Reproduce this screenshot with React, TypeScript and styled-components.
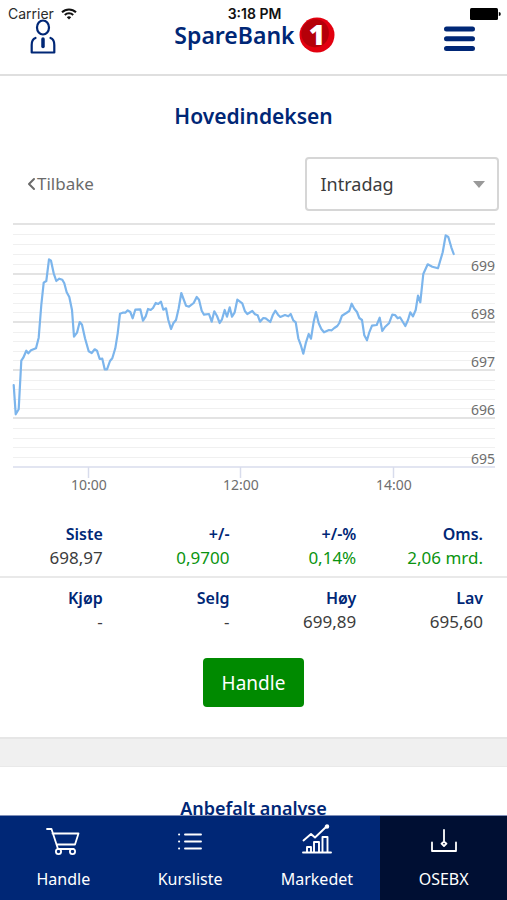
import React from "react";
import styled, { createGlobalStyle } from "styled-components";

const navy = "#002776";

const GlobalStyle = createGlobalStyle`
  *, *::before, *::after { box-sizing: border-box; }
  body {
    margin: 0;
    background: #fff;
    color: #3c3c3c;
    font-family: "Noto Sans", "Open Sans", sans-serif;
  }
  button, select { font-family: inherit; }
`;

const Screen = styled.div`
  height: 100vh;
  display: flex;
  flex-direction: column;
  overflow: hidden;
`;

const StatusBar = styled.div`
  position: absolute;
  top: 0;
  left: 0;
  right: 0;
  height: 28px;
  padding: 0 6px 0 8px;
  display: grid;
  grid-template-columns: 1fr auto 1fr;
  align-items: center;
  color: #2b2b2b;
  font: 14px/16px "Inter", sans-serif;
  pointer-events: none;
`;

const Carrier = styled.span`
  display: flex;
  align-items: center;
  gap: 7px;
`;

const Clock = styled.span`
  color: #111;
  font-weight: 600;
`;

const BatterySlot = styled.span`
  justify-self: end;
  display: flex;
`;

const Header = styled.header`
  flex: none;
  height: 76px;
  padding: 17px 32px 0 30px;
  display: grid;
  grid-template-columns: 1fr auto 1fr;
  align-items: start;
  border-bottom: 2px solid #dfdfdf;
`;

const IconButton = styled.button<{ $end?: boolean }>`
  justify-self: ${(p) => (p.$end ? "end" : "start")};
  display: flex;
  padding: 0;
  border: 0;
  background: none;
  color: ${navy};
  cursor: pointer;
`;

const Brand = styled.a`
  display: flex;
  align-items: center;
  gap: 4px;
  padding-left: 4px;
  color: ${navy};
  font: 600 23px/24px "Noto Sans", sans-serif;
  text-decoration: none;
`;

const BrandMark = styled.svg`
  overflow: visible;
  font: 800 28px/28px "Open Sans", sans-serif;
`;

const Content = styled.main`
  flex: 1;
  min-height: 0;
  overflow: hidden;
`;

const PageTitle = styled.h1`
  margin: 0;
  padding-top: 24px;
  color: ${navy};
  font-size: 21px;
  line-height: 32px;
  font-weight: 600;
  text-align: center;
`;

const Toolbar = styled.div`
  display: flex;
  align-items: center;
  justify-content: space-between;
  padding: 25px 8px 0 27px;
`;

const BackLink = styled.a`
  display: flex;
  align-items: center;
  gap: 1px;
  color: #6b6b6b;
  font-size: 17px;
  line-height: 24px;
  text-decoration: none;
`;

const SelectBox = styled.label`
  position: relative;
  width: 41%;
`;

const PeriodSelect = styled.select`
  width: 100%;
  height: 54px;
  padding: 0 40px 0 13px;
  appearance: none;
  border: 2px solid #d6d6d6;
  border-radius: 4px;
  background: #fff;
  color: #3c3c3c;
  font-size: 18px;
`;

const Caret = styled.svg`
  position: absolute;
  right: 14px;
  top: 24px;
  pointer-events: none;
`;

const Chart = styled.svg`
  display: block;
  width: 100%;
  height: auto;
  margin-top: 9px;
  font-size: 14px;
  fill: #6e6e6e;
`;

const Stats = styled.dl`
  margin: 0;
  display: grid;
  grid-template-columns: repeat(4, 1fr);
  padding-top: 14px;
`;

const Stat = styled.div<{ $ruled?: boolean }>`
  padding: 8px 24px 6px 0;
  text-align: right;
  line-height: 24px;
  border-bottom: 2px solid ${(p) => (p.$ruled ? "#e9e9e9" : "transparent")};
`;

const StatName = styled.dt`
  color: ${navy};
  font-size: 16px;
  font-weight: 600;
`;

const StatValue = styled.dd<{ $up?: boolean }>`
  margin: 0;
  color: ${(p) => (p.$up ? "#0a9410" : "#3c3c3c")};
  font-size: 17px;
`;

const Action = styled.div`
  display: flex;
  justify-content: center;
  padding: 16px 0 30px;
`;

const TradeButton = styled.button`
  height: 49px;
  padding: 0 19px;
  border: 0;
  border-radius: 4px;
  background: #008a00;
  color: #fff;
  font-size: 19px;
  cursor: pointer;
`;

const Band = styled.div`
  height: 30px;
  background: #f0f0f0;
  border-top: 2px solid #e6e6e6;
  border-bottom: 1px solid #e9e9e9;
`;

const SectionTitle = styled.h2`
  margin: 0;
  padding-top: 28px;
  color: ${navy};
  font-size: 18px;
  line-height: 26px;
  font-weight: 600;
  text-align: center;
`;

const TabBar = styled.nav`
  flex: none;
  display: grid;
  grid-template-columns: repeat(4, 1fr);
  height: 85px;
  border-top: 1px solid #7f8fb8;
  background: ${navy};
`;

const Tab = styled.a<{ $active?: boolean }>`
  display: flex;
  flex-direction: column;
  align-items: center;
  gap: 7px;
  padding-top: 8px;
  background: ${(p) => (p.$active ? "#000f33" : "transparent")};
  color: #fff;
  font-size: 16px;
  line-height: 24px;
  text-decoration: none;
`;

const hourTicks = [
  { x: 89, label: "10:00" },
  { x: 241, label: "12:00" },
  { x: 394, label: "14:00" },
];

const levels = [
  { y: 4, label: "" },
  { y: 54, label: "699" },
  { y: 102, label: "698" },
  { y: 150, label: "697" },
  { y: 198, label: "696" },
  { y: 247, label: "695" },
];

const series =
  "0.7,165 2.7,194.3 5.7,189.3 8.3,140.7 10.3,137.7 13.3,130.7 15.3,133.3 18,130.3 23,128.3 25.7,117.7 28.3,85 30.7,62.7 33.3,61 36,39.3 38,40.7 40.7,53.3 43.3,61 46.3,58.7 49.3,59.7 51.3,63.3 53.7,72.3 56.3,77 59,90 61,116.7 64,112.7 66.7,102 69,104.7 72,118.3 75.7,131.3 78.7,133 81.7,129.3 84,130.7 86.7,139 89.3,138.7 91.7,149.3 94,149.3 97,141 99.3,138.3 102.3,128.3 104.7,113.3 107,93.7 109.7,92.7 112.3,92.7 114.7,90.3 117.3,92 119.7,98.3 122.3,89.7 127.3,89.3 130,100.7 132.7,96.3 135,89 137.7,90 140,88 142.7,83 145.3,84 148,81.7 150.3,89.7 153,88.3 155.3,100 158,109 160.3,103.3 163,100 165.7,88.3 168.3,73 173,85.7 176,86.7 180.7,83 183.7,77 186,79.7 188.7,90.7 191,94.7 196,94 198.7,101.7 201.3,91.3 204,96 206.7,103 209,99.3 211.7,90 214,96.7 216.7,87.3 219,96.7 221.7,92.3 224.3,79.7 229.3,83.3 232,91.3 234.3,94 239.3,91 242,94.3 244.7,95.3 247,101.7 250.3,98 252.7,98.3 257.3,102 259.7,95.3 262.3,90.7 265,94.7 267.3,97 272,95 275.3,96.3 277.7,94 280.3,100.3 282.7,102.3 285.3,118.3 288,125.7 290.3,133.7 293,122.3 295.7,114 298,118.7 300.7,101.7 303,92 305.7,103.3 308.3,109 311,112.3 316,110 318.7,110.3 321.3,108 324.3,106 326.3,103 329,95.7 333.7,92.7 336.3,91 338.7,83.7 341.3,88.7 344,92 346.3,98 349,100 351.3,115.3 354,120.3 356.3,112.3 359,105.7 363.7,105 366.7,97.7 369.3,111 372,107 376,103.3 379.3,94.7 382,95 384.7,98.3 387,97.3 392.3,106 395,100 397.3,92.3 400,96.3 402.7,90 405,75.7 407.3,82.3 410.3,54 414.7,44.3 419.3,46.7 425,48.3 429.7,32.3 432.7,15.3 435.3,17 438.3,27.3 440.7,34";

const stats = [
  { name: "Siste", value: "698,97" },
  { name: "+/-", value: "0,9700", up: true },
  { name: "+/-%", value: "0,14%", up: true },
  { name: "Oms.", value: "2,06 mrd.", up: true },
  { name: "Kjøp", value: "-" },
  { name: "Selg", value: "-" },
  { name: "Høy", value: "699,89" },
  { name: "Lav", value: "695,60" },
];

function IndexChart() {
  return (
    <Chart viewBox="0 0 507 280" role="img" aria-label="Hovedindeksen, intradag">
      {levels.slice(1).map((level, i) => {
        const top = levels[i].y;
        const step = (level.y - top) / 5;
        return [1, 2, 3, 4].map((n) => (
          <line
            key={`${level.y}-${n}`}
            x1="13"
            x2="495"
            y1={Math.round(top + step * n) + 0.5}
            y2={Math.round(top + step * n) + 0.5}
            stroke="#f0f0f0"
          />
        ));
      })}
      {levels.map(({ y, label }, i) => (
        <g key={y}>
          <line
            x1="13"
            x2="495"
            y1={y}
            y2={y}
            stroke={i === levels.length - 1 ? "#d8dcec" : "#dadada"}
            strokeWidth="1.5"
          />
          <text x="495" y={y - 3} textAnchor="end">
            {label}
          </text>
        </g>
      ))}
      {hourTicks.map(({ x, label }) => (
        <g key={label}>
          <line x1={x - 0.5} x2={x - 0.5} y1="247" y2="258" stroke="#d8dcec" strokeWidth="1.5" />
          <text x={x} y="270" textAnchor="middle">
            {label}
          </text>
        </g>
      ))}
      <polyline
        points={series}
        transform="translate(13 0)"
        fill="none"
        stroke="#7cb5ec"
        strokeWidth="2.2"
        strokeLinejoin="round"
        strokeLinecap="round"
      />
    </Chart>
  );
}

const iconStroke = {
  fill: "none",
  stroke: "currentColor",
  strokeLinecap: "round",
  strokeLinejoin: "round",
} as const;

const CartIcon = () => (
  <svg width="34" height="36" viewBox="0 0 34 36" {...iconStroke} strokeWidth="1.8" aria-hidden="true">
    <path d="M1 5h4.500l6.500 20M6.500 9.500H32.500L29 20.500H11M12.500 25h15" />
    <circle cx="12.500" cy="27.500" r="2.600" />
    <circle cx="26.500" cy="27.500" r="2.600" />
  </svg>
);

const ListIcon = () => (
  <svg width="26" height="36" viewBox="0 0 26 36" {...iconStroke} strokeWidth="1.900" aria-hidden="true">
    <path d="M8 10.500h16M8 17.500h16M8 24.500h16M2 10.500h.2M2 17.500h.2M2 24.500h.2" />
  </svg>
);

const MarketIcon = () => (
  <svg width="30" height="36" viewBox="0 0 30 36" {...iconStroke} strokeWidth="1.900" aria-hidden="true">
    <path d="M1 28.500h28M5 28V23h4v5M12 28V18h5v10M20.500 28V13h5v15M1.500 16.500L9 10l4 3.500L24 3" />
    <circle cx="25" cy="2.500" r="1.300" fill="currentColor" />
  </svg>
);

const ExchangeIcon = () => (
  <svg width="26" height="36" viewBox="0 0 26 36" {...iconStroke} strokeWidth="1.800" aria-hidden="true">
    <path d="M1 18.500V27h24v-8.500M13 6v12M13 17.500l2.500 2.200L13 22l-2.500-2.300z" />
  </svg>
);

const tabs = [
  { label: "Handle", Icon: CartIcon },
  { label: "Kursliste", Icon: ListIcon },
  { label: "Markedet", Icon: MarketIcon },
  { label: "OSEBX", Icon: ExchangeIcon, active: true },
];

export default function App() {
  return (
    <>
      <GlobalStyle />
      <Screen>
        <Header>
          <IconButton aria-label="Min side">
            <svg width="26" height="37" viewBox="0 0 26 37" {...iconStroke} strokeWidth="2.2" aria-hidden="true">
              <ellipse cx="13" cy="10.500" rx="6" ry="7" />
              <path d="M5.500 21C2.500 22 1.700 25 1.700 28v7.500h22.600V28c0-3-.8-6-3.800-7" />
              <path d="M13 22v7.500" strokeWidth="3.500" />
            </svg>
          </IconButton>
          <Brand href="#" aria-label="SpareBank 1">
            SpareBank
            <BrandMark width="36" height="36" viewBox="0 0 36 36" aria-hidden="true">
              <circle cx="18" cy="18" r="17.500" fill="#e2000f" />
              <path d="M6 26A14 14 0 0 1 27 7a15 15 0 0 1-2 20A14 14 0 0 1 6 26z" fill="#b50009" />
              <text x="18" y="28" textAnchor="middle" fill="#fff">
                1
              </text>
            </BrandMark>
          </Brand>
          <IconButton $end aria-label="Meny">
            <svg width="31" height="36" viewBox="0 0 31 36" {...iconStroke} strokeWidth="5" aria-hidden="true">
              <path d="M2.500 12h26M2.500 21.700h26M2.500 31.500h26" />
            </svg>
          </IconButton>
        </Header>

        <StatusBar>
          <Carrier>
            Carrier
            <svg width="16" height="12" viewBox="0 0 16 12" fill="none" stroke="#111" strokeWidth="2" aria-hidden="true">
              <path d="M1 4.300a10 10 0 0 1 14 0M3.800 7a6 6 0 0 1 8.400 0" />
              <path d="M5.800 9.200a3.200 3.200 0 0 1 4.400 0L8 11.500z" fill="#111" stroke="none" />
            </svg>
          </Carrier>
          <Clock>3:18 PM</Clock>
          <BatterySlot>
            <svg width="31" height="12" viewBox="0 0 31 12" aria-hidden="true">
              <rect width="28" height="12" rx="1.500" />
              <path d="M28.800 4a2 2 0 0 1 0 4z" />
            </svg>
          </BatterySlot>
        </StatusBar>

        <Content>
          <PageTitle>Hovedindeksen</PageTitle>
          <Toolbar>
            <BackLink href="#">
              <svg width="9" height="14" viewBox="0 0 9 14" {...iconStroke} strokeWidth="2" aria-hidden="true">
                <path d="M7 2L2 7l5 5" />
              </svg>
              Tilbake
            </BackLink>
            <SelectBox>
              <PeriodSelect aria-label="Periode" defaultValue="Intradag">
                <option>Intradag</option>
              </PeriodSelect>
              <Caret width="12" height="7" viewBox="0 0 12 7" aria-hidden="true">
                <path d="M0 0h12L6 7z" fill="#999" />
              </Caret>
            </SelectBox>
          </Toolbar>
          <IndexChart />
          <Stats>
            {stats.map((s, i) => (
              <Stat key={s.name} $ruled={i < 4}>
                <StatName>{s.name}</StatName>
                <StatValue $up={s.up}>{s.value}</StatValue>
              </Stat>
            ))}
          </Stats>
          <Action>
            <TradeButton>Handle</TradeButton>
          </Action>
          <Band />
          <SectionTitle>Anbefalt analyse</SectionTitle>
        </Content>

        <TabBar>
          {tabs.map(({ label, Icon, active }) => (
            <Tab key={label} href="#" $active={active} aria-current={active ? "page" : undefined}>
              <Icon />
              {label}
            </Tab>
          ))}
        </TabBar>
      </Screen>
    </>
  );
}
